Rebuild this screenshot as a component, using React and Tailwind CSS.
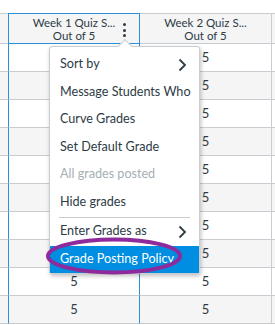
import React from "react";

const rows = Array.from({ length: 10 });

function Chevron() {
  return (
    <svg width="9" height="14" viewBox="0 0 9 14" className="shrink-0">
      <polyline points="1.5,1.5 7,7 1.5,12.5" fill="none" stroke="#2d3b45" strokeWidth="1.8" />
    </svg>
  );
}

function MenuItem({ children, chevron, disabled, active }) {
  return (
    <div
      className={`h-[27.5px] flex items-center justify-between whitespace-nowrap pl-[10px] pr-[12px] ${
        active ? "bg-[#008ee2] text-white" : disabled ? "text-[#a5afb5]" : "text-[#2d3b45]"
      }`}
    >
      <span>{children}</span>
      {chevron && <Chevron />}
    </div>
  );
}

export default function App() {
  return (
    <div className="relative w-[275px] h-[325px] overflow-hidden bg-white font-['Lato','Liberation_Sans',sans-serif] text-[#2d3b45]">
      <div className="h-[13px]" />

      {/* header */}
      <div className="flex h-[31px] bg-[#f5f5f5] border-t border-[#c7cdd1]">
        <div className="w-[8px] shrink-0 border-b border-[#c7cdd1]" />
        <div className="w-[132px] shrink-0 -mt-px border border-[#2d8fd5] relative flex flex-col items-center justify-center text-[11.5px] leading-[13px]">
          <span>Week 1 Quiz S...</span>
          <span>Out of 5</span>
          <div className="absolute left-[114px] top-[9px] flex flex-col gap-[2.5px]">
            <span className="w-[3px] h-[3px] rounded-full bg-[#2d3b45]" />
            <span className="w-[3px] h-[3px] rounded-full bg-[#2d3b45]" />
            <span className="w-[3px] h-[3px] rounded-full bg-[#2d3b45]" />
          </div>
        </div>
        <div className="w-[132px] shrink-0 border-b border-r border-[#c7cdd1] flex flex-col items-center justify-center text-[11.5px] leading-[13px]">
          <span>Week 2 Quiz S...</span>
          <span>Out of 5</span>
        </div>
        <div className="flex-1 border-b border-[#c7cdd1]" />
      </div>

      {/* body */}
      {rows.map((_, i) => (
        <div key={i} className={`flex h-[28px] ${i % 2 ? "bg-[#f5f5f5]" : "bg-white"}`}>
          <div className="w-[8px] shrink-0 border-b border-[#c7cdd1]" />
          <div className="w-[132px] shrink-0 border-x border-b border-x-[#2d8fd5] border-b-[#c7cdd1] flex items-center justify-center text-[13px]">
            5
          </div>
          <div className="w-[132px] shrink-0 border-b border-r border-[#c7cdd1] flex items-center justify-center text-[13px]">
            5
          </div>
          <div className="flex-1 border-b border-[#c7cdd1]" />
        </div>
      ))}

      {/* menu */}
      <div className="absolute left-[49px] top-[46px] w-[151px] bg-white border border-[#c7cdd1] rounded-[3px] shadow-[1px_2px_4px_rgba(0,0,0,0.25)] pt-[4px] text-[12.6px]">
        <div className="absolute -top-[6px] left-[70px] w-[10px] h-[10px] bg-white border-l border-t border-[#c7cdd1] rotate-45" />
        <div className="relative">
          <MenuItem chevron>Sort by</MenuItem>
          <MenuItem>Message Students Who</MenuItem>
          <MenuItem>Curve Grades</MenuItem>
          <MenuItem>Set Default Grade</MenuItem>
          <MenuItem disabled>All grades posted</MenuItem>
          <MenuItem>Hide grades</MenuItem>
          <div className="mx-[9px] my-[0.5px] h-px bg-[#c7cdd1]" />
          <MenuItem chevron>Enter Grades as</MenuItem>
          <MenuItem active>Grade Posting Policy</MenuItem>
        </div>
      </div>

      {/* annotation */}
      <svg className="absolute left-0 top-0 pointer-events-none" width="275" height="325">
        <ellipse cx="114" cy="256" rx="66" ry="16.5" fill="none" stroke="#8e2a9b" strokeWidth="4" />
      </svg>
    </div>
  );
}
